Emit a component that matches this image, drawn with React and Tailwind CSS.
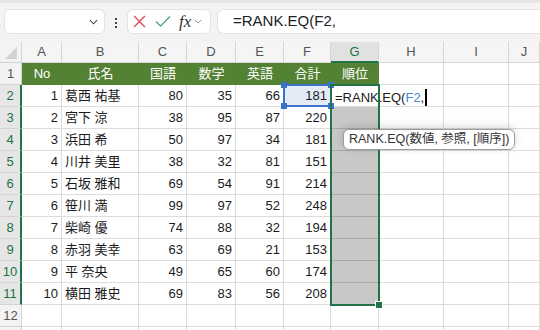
const data = [
    [1, '葛西 祐基', 80, 35, 66, 181],
    [2, '宮下 涼', 38, 95, 87, 220],
    [3, '浜田 希', 50, 97, 34, 181],
    [4, '川井 美里', 38, 32, 81, 151],
    [5, '石坂 雅和', 69, 54, 91, 214],
    [6, '笹川 満', 99, 97, 52, 248],
    [7, '柴崎 優', 74, 88, 32, 194],
    [8, '赤羽 美幸', 63, 69, 21, 153],
    [9, '平 奈央', 49, 65, 60, 174],
    [10, '横田 雅史', 69, 83, 56, 208],
];

const letters = ['A', 'B', 'C', 'D', 'E', 'F', 'G', 'H', 'I', 'J'];
const heads = ['No', '氏名', '国語', '数学', '英語', '合計', '順位'];

const font = { fontFamily: '"Liberation Sans", "Noto Sans CJK JP", sans-serif' };

function Chevron({ className }) {
    return (
        <svg className={className} viewBox="0 0 10 6" fill="none" stroke="currentColor" strokeWidth="1.2">
            <path d="M1 1l4 4 4-4" />
        </svg>
    );
}

function FormulaBar() {
    return (
        <div className="flex h-[42px] items-start border-t-[3px] border-[#e6e6e6] bg-[#f3f3f3] pt-[6px]">
            <div className="ml-[4px] flex h-[25px] w-[101px] items-center justify-end rounded-md border border-[#e3e3e3] bg-white pr-[6px]">
                <Chevron className="h-[6px] w-[9px] text-[#444]" />
            </div>
            <div className="flex w-[22px] flex-col items-center justify-center gap-[2px] pt-[9px]">
                <span className="h-[2px] w-[2px] bg-[#444]" />
                <span className="h-[2px] w-[2px] bg-[#444]" />
                <span className="h-[2px] w-[2px] bg-[#444]" />
            </div>
            <div className="flex h-[25px] w-[84px] items-center rounded-md border border-[#e3e3e3] bg-white pl-[5px]">
                <svg className="h-[13px] w-[13px]" viewBox="0 0 12 12" stroke="#e0484f" strokeWidth="1.2" fill="none">
                    <path d="M1 1l10 10M11 1L1 11" />
                </svg>
                <svg className="ml-[9px] h-[13px] w-[16px]" viewBox="0 0 16 12" stroke="#4fa878" strokeWidth="1.3" fill="none">
                    <path d="M1 6l4.5 4.5L15 1" />
                </svg>
                <span className="ml-[8px] text-[17px] italic text-[#333]" style={{ fontFamily: '"Liberation Serif", serif' }}>fx</span>
                <Chevron className="ml-[3px] h-[5px] w-[8px] text-[#8a8aa0]" />
            </div>
            <div className="ml-[6px] flex h-[25px] flex-1 items-center rounded-l-md border border-r-0 border-[#e3e3e3] bg-white pl-[15px] text-[15px] text-[#222]">
                =RANK.EQ(F2,
            </div>
        </div>
    );
}

export default function App() {
    const cols = 'grid grid-cols-[22px_40px_77px_48px_49px_48px_47px_48px_65px_65px_1fr] grid-rows-[21px_repeat(13,22px)]';
    const cell = 'border-r border-b border-[#dcdcdc] flex items-center px-[3px] whitespace-nowrap';

    return (
        <div className="h-[330px] w-[540px] overflow-hidden bg-white text-[13px] text-[#1b1b1b]" style={font}>
            <FormulaBar />
            <div className={`relative ${cols}`}>
                {/* corner */}
                <div className="flex items-end justify-end border-r border-b border-[#d4d4d4] bg-[#f3f3f3] pb-[3px] pr-[4px]">
                    <svg className="h-[12px] w-[12px]" viewBox="0 0 12 12">
                        <path d="M12 0V12H0Z" fill="#d2d2d2" />
                    </svg>
                </div>
                {letters.map((l) => (
                    <div
                        key={l}
                        className={`flex items-center justify-center border-r border-[#d4d4d4] text-[13px] ${
                            l === 'G'
                                ? 'border-b-2 border-b-[#217346] bg-[#e1e1e1] text-[#217346]'
                                : 'border-b bg-[#f5f5f5] text-[#555]'
                        }`}
                    >
                        {l}
                    </div>
                ))}

                {/* row 1 */}
                <div className="flex items-center justify-center border-r border-b border-[#d4d4d4] bg-[#f3f3f3] text-[#555]">1</div>
                {heads.map((h) => (
                    <div key={h} className="flex items-center justify-center bg-[#548235] text-white">
                        {h}
                    </div>
                ))}
                <div className={cell} />
                <div className={cell} />
                <div className={cell} />

                {data.map((r, i) => (
                    <div key={r[0]} className="contents">
                        <div className="flex items-center justify-center border-r-2 border-b border-r-[#217346] border-b-[#d4d4d4] bg-[#e6e6e6] text-[#217346]">
                            {i + 2}
                        </div>
                        <div className={`${cell} justify-end`}>{r[0]}</div>
                        <div className={cell}>{r[1]}</div>
                        <div className={`${cell} justify-end`}>{r[2]}</div>
                        <div className={`${cell} justify-end`}>{r[3]}</div>
                        <div className={`${cell} justify-end`}>{r[4]}</div>
                        <div className={`${cell} justify-end ${i === 0 ? 'bg-[#e4ebf7]' : ''}`}>{r[5]}</div>
                        {i === 0 ? (
                            <div className="relative border-r border-b border-[#dcdcdc]">
                                <span className="absolute left-[4px] top-[3px] flex items-center whitespace-nowrap text-[13px]">
                                    =RANK.EQ(<span className="text-[#4a86d8]">F2</span>,
                                    <span className="ml-[1px] h-[17px] w-[2px] bg-black" />
                                </span>
                            </div>
                        ) : (
                            <div className="border-r border-b border-r-[#dcdcdc] border-b-[#a9a9a9] bg-[#c8c8c8]" />
                        )}
                        <div className={cell} />
                        <div className={cell} />
                        <div className={cell} />
                    </div>
                ))}

                {/* rows 12-13 */}
                {[12, 13].map((n) => (
                    <div key={n} className="contents">
                        <div className="flex items-center justify-center border-r border-b border-[#d4d4d4] bg-[#f3f3f3] text-[#555]">
                            {n === 12 ? n : ''}
                        </div>
                        {letters.map((l) => (
                            <div key={l} className={cell} />
                        ))}
                    </div>
                ))}

                {/* F2 reference box */}
                <div className="pointer-events-none absolute left-[283px] top-[42px] h-[23px] w-[49px] border-2 border-[#3b73c8]">
                    <span className="absolute -left-[4px] -top-[4px] h-[6px] w-[6px] bg-[#3b73c8]" />
                    <span className="absolute -right-[4px] -top-[4px] h-[6px] w-[6px] bg-[#3b73c8]" />
                    <span className="absolute -bottom-[4px] -left-[4px] h-[6px] w-[6px] bg-[#3b73c8]" />
                    <span className="absolute -bottom-[4px] -right-[4px] h-[6px] w-[6px] bg-[#3b73c8]" />
                </div>

                {/* G2:G11 selection */}
                <div className="pointer-events-none absolute left-[330px] top-[42px] h-[222px] w-[50px] border-2 border-[#217346]">
                    <span className="absolute -bottom-[5px] -right-[5px] h-[8px] w-[8px] border border-white bg-[#217346]" />
                </div>

                {/* tooltip */}
                <div className="absolute left-[343px] top-[87px] flex h-[21px] items-center whitespace-nowrap rounded-[6px] border border-[#9c9c9c] bg-white px-[5px] text-[12.5px] text-[#333] shadow-[0_-2px_8px_rgba(0,0,0,0.16)]">
                    RANK.EQ(数値, 参照, [順序])
                </div>
            </div>
        </div>
    );
}
